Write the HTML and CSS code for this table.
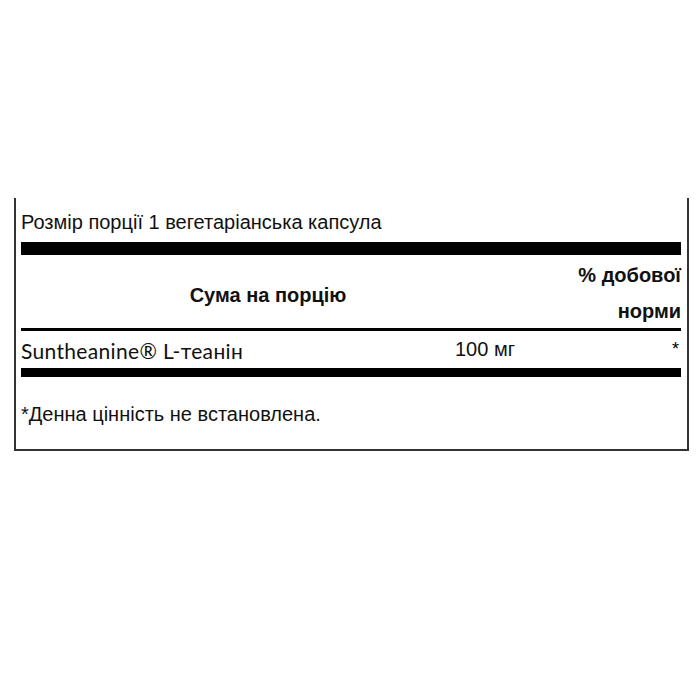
FILE: index.html
```html
<!DOCTYPE html>
<html lang="uk">
<head>
<meta charset="utf-8">
<title>Suntheanine</title>
<link rel="stylesheet" href="styles.css">
</head>
<body>
<div class="panel">
  <div class="serving">Розмір порції 1 вегетаріанська капсула</div>
  <div class="bar-thick"></div>
  <div class="head">
    <div class="head-amount">Сума на порцію</div>
    <div class="head-dv">% добової<br>норми</div>
  </div>
  <div class="rule"></div>
  <div class="row">
    <span class="name">Suntheanine® L-теанін</span>
    <span class="amt">100 мг</span>
    <span class="dv">*</span>
  </div>
  <div class="bar-mid"></div>
  <div class="foot">*Денна цінність не встановлена.</div>
</div>
</body>
</html>
```

FILE: styles.css
```css
html, body {
  margin: 0;
  padding: 0;
  background: #ffffff;
}
body {
  font-family: "Liberation Sans", Arial, sans-serif;
  color: #111111;
}
.panel {
  box-sizing: border-box;
  margin: 198px 0 0 14px;
  width: 675px;
  border: 2px solid #333333;
  border-top: none;
  padding: 13px 6px 24px 5px;
}
.serving {
  font-size: 20px;
  line-height: 22px;
}
.bar-thick {
  height: 13px;
  background: #000000;
  margin-top: 9px;
}
.head {
  display: grid;
  grid-template-columns: 494px 1fr;
  margin-top: 2px;
  font-weight: bold;
  font-size: 20px;
}
.head-amount {
  text-align: center;
  line-height: 22px;
  padding-top: 27px;
}
.head-dv {
  text-align: right;
  line-height: 36px;
}
.rule {
  height: 3px;
  background: #000000;
  margin-top: -1px;
}
.row {
  display: grid;
  grid-template-columns: 434px auto 1fr;
  align-items: start;
  padding-top: 7px;
  font-size: 20px;
  line-height: 22px;
}
.name {
  font-family: "Lato", "Liberation Sans", sans-serif;
  font-size: 21px;
  letter-spacing: 0.33px;
  padding-top: 2px;
}
.dv {
  text-align: right;
  font-size: 18px;
  color: #000000;
  padding-right: 2px;
}
.bar-mid {
  height: 9px;
  background: #000000;
  margin-top: 6px;
}
.foot {
  margin-top: 26px;
  font-size: 20px;
  line-height: 22px;
}
```
